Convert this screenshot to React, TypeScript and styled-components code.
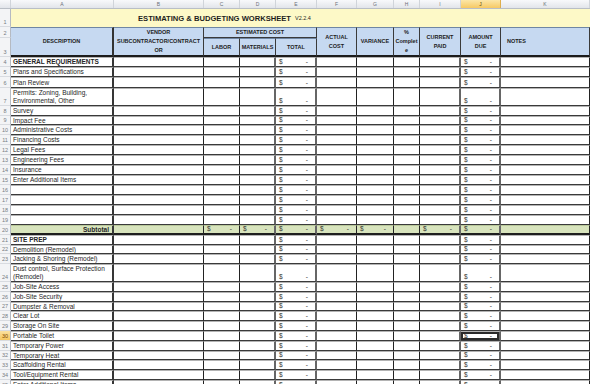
import React from "react";
import styled, { createGlobalStyle, css } from "styled-components";

const COLS = "11px 103px 90px 36px 36px 41px 40px 37px 26px 41px 40px 89px";

const GlobalStyle = createGlobalStyle`
  *, *::before, *::after {
    box-sizing: border-box;
  }
  html,
  body {
    margin: 0;
    padding: 0;
    background: #ffffff;
  }
  body {
    font-family: "Liberation Sans", Arial, sans-serif;
    color: #222;
  }
  #root {
    width: 590px;
    height: 384px;
    overflow: hidden;
  }
`;

const Sheet = styled.div`
  width: 590px;
  height: 384px;
  overflow: hidden;
  background: #fff;
`;

const Row = styled.div<{ $h: number }>`
  display: grid;
  grid-template-columns: ${COLS};
  height: ${(p) => p.$h}px;
`;

const LetterBar = styled(Row)`
  background: linear-gradient(#f8f9fb, #e2e5ea);
  border-bottom: 1px solid #b9bec6;
`;

const Letter = styled.div<{ $active?: boolean }>`
  display: flex;
  align-items: center;
  justify-content: center;
  font-size: 5px;
  color: #6b7078;
  border-right: 1px solid #d0d4da;

  ${(p) =>
    p.$active &&
    css`
      background: linear-gradient(#fce7a8, #f6c964);
      color: #5a4300;
      border-right-color: #dfae4c;
    `}
`;

const RowNum = styled.div<{ $active?: boolean }>`
  display: flex;
  align-items: flex-end;
  justify-content: center;
  font-size: 5.5px;
  line-height: 7px;
  color: #767b82;
  background: #f3f4f6;
  border-right: 1px solid #b5bac2;
  border-bottom: 1px solid #d8dbe0;

  ${(p) =>
    p.$active &&
    css`
      background: linear-gradient(#fbe1a0, #f5c660);
      color: #7a4a00;
    `}
`;

const TitleCell = styled.div`
  grid-column: 2 / -1;
  display: flex;
  align-items: center;
  padding-left: 127px;
  background: #fdf9c7;
  font-size: 7.6px;
  font-weight: bold;
  color: #1e1e1e;
  white-space: nowrap;

  small {
    margin-left: 4px;
    font-size: 5.5px;
    font-weight: normal;
  }
`;

const HeadBlock = styled.div`
  display: grid;
  grid-template-columns: ${COLS};
  grid-template-rows: 11px 19px;
  height: 30px;
`;

const HeadNum = styled(RowNum)<{ $row: number }>`
  grid-column: 1;
  grid-row: ${(p) => p.$row};
`;

const HeadCell = styled.div<{ $col: string; $row: string; $left?: boolean; $top?: boolean; $thick?: boolean }>`
  grid-column: ${(p) => p.$col};
  grid-row: ${(p) => p.$row};
  display: flex;
  flex-direction: column;
  align-items: center;
  justify-content: center;
  text-align: center;
  background: #c6d9f1;
  border-right: ${(p) => (p.$thick ? "2px solid #333" : "1px solid #3a3a3a")};
  border-top: 1px solid #6f86a3;
  border-bottom: ${(p) => (p.$top ? "1px solid #3a3a3a" : "2px solid #1c1c1c")};
  font-size: 5.5px;
  font-weight: bold;
  line-height: 9px;
  color: #1c1c1c;
  white-space: nowrap;

  ${(p) =>
    p.$left &&
    css`
      align-items: flex-start;
      padding-left: 6px;
    `}
`;

type Edge = "thick" | "double" | undefined;

const Cell = styled.div<{ $edge?: Edge; $green?: boolean; $selected?: boolean }>`
  display: flex;
  align-items: center;
  padding: 0 2px;
  font-size: 6.5px;
  line-height: 8px;
  color: #262626;
  white-space: nowrap;
  overflow: hidden;
  border-top: 1px solid #b4b4b4;
  border-bottom: 1px solid #3a3a3a;
  border-right: ${(p) =>
    p.$edge === "thick"
      ? "2px solid #363636"
      : p.$edge === "double"
      ? "2px solid #666"
      : "1px solid #222"};
  background: ${(p) => (p.$green ? "#d8e4bd" : "#fff")};

  ${(p) =>
    p.$green &&
    css`
      border-top-color: #b8c79a;
      border-bottom: 2px solid #1e1e1e;
    `}

  ${(p) =>
    p.$selected &&
    css`
      box-shadow: inset 0 0 0 2px #2a2a2a;
    `}
`;

const Label = styled(Cell)<{ $bold?: boolean; $wrap?: boolean; $right?: boolean }>`
  font-weight: ${(p) => (p.$bold ? "bold" : "normal")};
  justify-content: ${(p) => (p.$right ? "flex-end" : "flex-start")};
  white-space: ${(p) => (p.$wrap ? "normal" : "nowrap")};
  padding-right: ${(p) => (p.$right ? "3px" : "2px")};
`;

const MoneyCell = styled(Cell)`
  align-items: flex-end;
  justify-content: space-between;
  padding: 0 7px 0 3px;
  color: #333;
`;

type Item = { n: number; h: number; label?: string; bold?: boolean; wrap?: boolean };

const topRows: Item[] = [
  { n: 4, h: 10, label: "GENERAL REQUIREMENTS", bold: true },
  { n: 5, h: 10, label: "Plans and Specifications" },
  { n: 6, h: 11, label: "Plan Review" },
  { n: 7, h: 18, label: "Permits: Zoning, Building, Environmental, Other", wrap: true },
  { n: 8, h: 10, label: "Survey" },
  { n: 9, h: 9, label: "Impact Fee" },
  { n: 10, h: 10, label: "Administrative Costs" },
  { n: 11, h: 10, label: "Financing Costs" },
  { n: 12, h: 10, label: "Legal Fees" },
  { n: 13, h: 10, label: "Engineering Fees" },
  { n: 14, h: 10, label: "Insurance" },
  { n: 15, h: 10, label: "Enter Additional Items" },
  { n: 16, h: 10 },
  { n: 17, h: 10 },
  { n: 18, h: 10 },
  { n: 19, h: 10 },
];

const bottomRows: Item[] = [
  { n: 21, h: 10, label: "SITE PREP", bold: true },
  { n: 22, h: 9, label: "Demolition (Remodel)" },
  { n: 23, h: 10, label: "Jacking & Shoring (Remodel)" },
  { n: 24, h: 18, label: "Dust control, Surface Protection (Remodel)", wrap: true },
  { n: 25, h: 10, label: "Job-Site Access" },
  { n: 26, h: 10, label: "Job-Site Security" },
  { n: 27, h: 9, label: "Dumpster & Removal" },
  { n: 28, h: 10, label: "Clear Lot" },
  { n: 29, h: 10, label: "Storage On Site" },
  { n: 30, h: 10, label: "Portable Toilet" },
  { n: 31, h: 10, label: "Temporary Power" },
  { n: 32, h: 9, label: "Temporary Heat" },
  { n: 33, h: 10, label: "Scaffolding Rental" },
  { n: 34, h: 10, label: "Tool/Equipment Rental" },
  { n: 35, h: 10, label: "Enter Additional Items" },
];

const ACTIVE_ROW = 30;

function Money({ edge, green, selected }: { edge?: Edge; green?: boolean; selected?: boolean }) {
  return (
    <MoneyCell $edge={edge} $green={green} $selected={selected}>
      <span>$</span>
      <span>-</span>
    </MoneyCell>
  );
}

function ItemRow({ item }: { item: Item }) {
  const active = item.n === ACTIVE_ROW;
  return (
    <Row $h={item.h}>
      <RowNum $active={active}>{item.n}</RowNum>
      <Label $edge="thick" $bold={item.bold} $wrap={item.wrap}>
        {item.wrap ? <span>{item.label}</span> : item.label}
      </Label>
      <Cell />
      <Cell />
      <Cell $edge="double" />
      <Money edge="double" />
      <Cell />
      <Cell />
      <Cell />
      <Cell $edge="double" />
      <Money edge="double" selected={active} />
      <Cell />
    </Row>
  );
}

function SubtotalRow() {
  return (
    <Row $h={10}>
      <RowNum>20</RowNum>
      <Label $green $edge="thick" $bold $right>
        Subtotal
      </Label>
      <Cell $green />
      <Money green />
      <Money green edge="double" />
      <Money green edge="double" />
      <Money green />
      <Money green />
      <Cell $green />
      <Money green edge="double" />
      <Money green edge="double" />
      <Cell $green />
    </Row>
  );
}

export default function App() {
  const letters = ["A", "B", "C", "D", "E", "F", "G", "H", "I", "J", "K"];
  return (
    <Sheet>
      <GlobalStyle />
      <LetterBar $h={9}>
        <Letter />
        {letters.map((l) => (
          <Letter key={l} $active={l === "J"}>
            {l}
          </Letter>
        ))}
      </LetterBar>

      <Row $h={18}>
        <RowNum>1</RowNum>
        <TitleCell>
          ESTIMATING &amp; BUDGETING WORKSHEET
          <small>V2.2.4</small>
        </TitleCell>
      </Row>

      <HeadBlock>
        <HeadNum $row={1}>2</HeadNum>
        <HeadNum $row={2}>3</HeadNum>
        <HeadCell $col="2" $row="1 / 3" $thick>
          DESCRIPTION
        </HeadCell>
        <HeadCell $col="3" $row="1 / 3">
          <span>VENDOR</span>
          <span>SUBCONTRACTOR/CONTRACT</span>
          <span>OR</span>
        </HeadCell>
        <HeadCell $col="4 / 7" $row="1" $top>
          ESTIMATED COST
        </HeadCell>
        <HeadCell $col="4" $row="2">
          LABOR
        </HeadCell>
        <HeadCell $col="5" $row="2">
          MATERIALS
        </HeadCell>
        <HeadCell $col="6" $row="2">
          TOTAL
        </HeadCell>
        <HeadCell $col="7" $row="1 / 3">
          <span>ACTUAL</span>
          <span>COST</span>
        </HeadCell>
        <HeadCell $col="8" $row="1 / 3">
          VARIANCE
        </HeadCell>
        <HeadCell $col="9" $row="1 / 3">
          <span>%</span>
          <span>Complet</span>
          <span>e</span>
        </HeadCell>
        <HeadCell $col="10" $row="1 / 3">
          <span>CURRENT</span>
          <span>PAID</span>
        </HeadCell>
        <HeadCell $col="11" $row="1 / 3">
          <span>AMOUNT</span>
          <span>DUE</span>
        </HeadCell>
        <HeadCell $col="12" $row="1 / 3" $left>
          NOTES
        </HeadCell>
      </HeadBlock>

      {topRows.map((item) => (
        <ItemRow key={item.n} item={item} />
      ))}
      <SubtotalRow />
      {bottomRows.map((item) => (
        <ItemRow key={item.n} item={item} />
      ))}
    </Sheet>
  );
}
